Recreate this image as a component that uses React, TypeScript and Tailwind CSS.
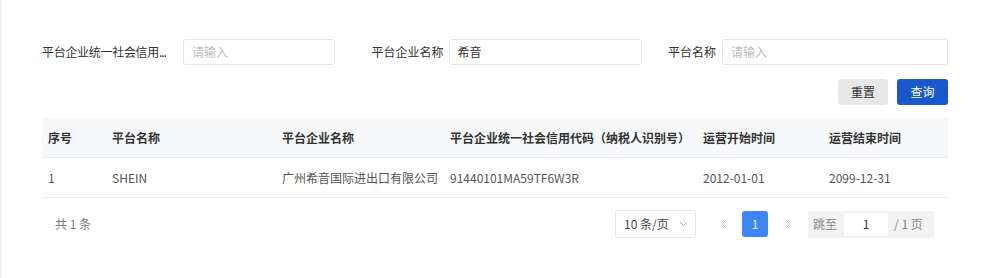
import React from "react";

const font = { fontFamily: '"Noto Sans CJK SC", "Noto Sans", sans-serif' };

function Field({ label, value, placeholder, labelClass }: { label: string; value?: string; placeholder?: string; labelClass: string }) {
  return (
    <div className="flex items-center">
      <span className={`text-[12px] text-[#333] whitespace-nowrap ${labelClass}`}>{label}</span>
      <div className="flex-1 h-[26px] border border-[#e6e6e6] rounded-[3px] bg-white flex items-center px-[8px] text-[12px]">
        {value ? <span className="text-[#333]">{value}</span> : <span className="text-[#bdbdbd]">{placeholder}</span>}
      </div>
    </div>
  );
}

export default function App() {
  const cols = ["w-[64px]", "w-[170px]", "w-[168px]", "w-[253px]", "w-[126px]", "w-[125px]"];
  const head = ["序号", "平台名称", "平台企业名称", "平台企业统一社会信用代码（纳税人识别号）", "运营开始时间", "运营结束时间"];
  const row = ["1", "SHEIN", "广州希音国际进出口有限公司", "91440101MA59TF6W3R", "2012-01-01", "2099-12-31"];
  return (
    <div style={font} className="w-[986px] h-[278px] bg-white border-l-2 border-[#f0f0f0] pl-[40px] pr-[38px] pt-[39px]">
      <div className="grid grid-cols-3 gap-x-[13.5px]">
        <div className="flex items-center">
          <span className="text-[12px] text-[#333] whitespace-nowrap w-[141px] tracking-[-0.3px]">
            平台企业统一社会信用<span className="tracking-[-1px]">...</span>
          </span>
          <div className="flex-1 h-[26px] border border-[#e6e6e6] rounded-[3px] bg-white flex items-center px-[8px] text-[12px]">
            <span className="text-[#bdbdbd]">请输入</span>
          </div>
        </div>
        <Field label="平台企业名称" value="希音" labelClass="pl-[23px] pr-[5px]" />
        <Field label="平台名称" placeholder="请输入" labelClass="pl-[13px] pr-[6px]" />
      </div>
      <div className="flex justify-end gap-[9px] mt-[14px]">
        <div className="w-[50px] h-[26px] rounded-[3px] bg-[#e8e8e8] text-[#333] text-[12px] flex items-center justify-center">重置</div>
        <div className="w-[51px] h-[26px] rounded-[3px] bg-[#1a57cc] text-white text-[12px] flex items-center justify-center">查询</div>
      </div>
      <div className="mt-[13px] text-[12px]">
        <div className="flex h-[40px] items-center bg-[#f7f8fa] border-b border-[#ebedf0] font-bold text-[#333]">
          {head.map((h, i) => (
            <div key={i} className={`${cols[i]} pl-[6px] whitespace-nowrap`}>{h}</div>
          ))}
        </div>
        <div className="flex h-[40px] items-center border-b border-[#ebedf0] text-[#555]">
          {row.map((h, i) => (
            <div key={i} className={`${cols[i]} pl-[6px] whitespace-nowrap`}>{h}</div>
          ))}
        </div>
      </div>
      <div className="flex items-center mt-[12px] h-[28px] text-[12px]">
        <span className="ml-[13px] text-[#777]">共 1 条</span>
        <div className="flex-1" />
        <div className="w-[81px] h-[28px] border border-[#e8e8e8] rounded-[3px] flex items-center justify-between pl-[8px] pr-[7px] text-[#444]">
          <span>10 条/页</span>
          <svg width="9" height="6" viewBox="0 0 9 6"><path d="M1 1l3.5 3.5L8 1" fill="none" stroke="#aaa" strokeWidth="1" /></svg>
        </div>
        <svg className="ml-[25px]" width="6" height="10" viewBox="0 0 6 10"><path d="M5 1L1 5l4 4" fill="none" stroke="#bbb" strokeWidth="1" /></svg>
        <div className="ml-[15px] w-[26px] h-[26px] rounded-[3px] bg-[#3d85f5] text-white flex items-center justify-center">1</div>
        <svg className="ml-[17px]" width="6" height="10" viewBox="0 0 6 10"><path d="M1 1l4 4-4 4" fill="none" stroke="#bbb" strokeWidth="1" /></svg>
        <div className="ml-[17px] mr-[14px] h-[27px] w-[126px] bg-[#f2f2f2] rounded-[2px] flex items-center px-[5px] text-[#888]">
          <span className="mr-[7px]">跳至</span>
          <div className="w-[44px] h-[23px] bg-white flex items-center justify-center text-[#333]">1</div>
          <span className="ml-[6px]">/ 1 页</span>
        </div>
      </div>
    </div>
  );
}
